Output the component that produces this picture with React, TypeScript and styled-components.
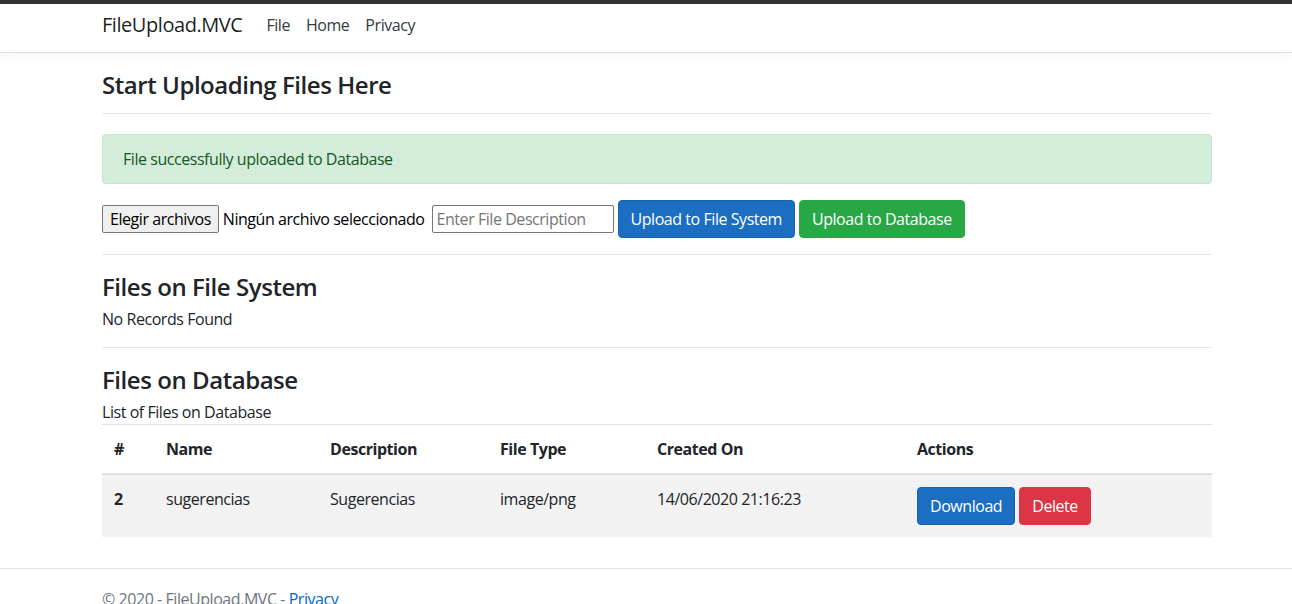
import React from "react";
import styled, { createGlobalStyle } from "styled-components";

const FONT = `"Open Sans", "Noto Sans", Arial, sans-serif`;

const Global = createGlobalStyle`
  html, body { margin: 0; padding: 0; background: #fff; }
  body {
    font-family: ${FONT};
    font-size: 16px;
    line-height: 1.5;
    color: #212529;
    letter-spacing: -0.028em;
  }
  * { box-sizing: border-box; }
  button, input { letter-spacing: inherit; }
`;

const TopStrip = styled.div`
  height: 4px;
  background: #333;
`;

const NavBar = styled.nav`
  height: 49px;
  padding-bottom: 6px;
  background: #fff;
  border-bottom: 1px solid #dee2e6;
  box-shadow: 0 0.25rem 0.75rem rgba(0, 0, 0, 0.05);
  display: flex;
  align-items: center;
`;

const Container = styled.div`
  width: 1110px;
  margin-left: 102px;
`;

const NavInner = styled(Container)`
  display: flex;
  align-items: center;
`;

const Brand = styled.a`
  font-size: 20px;
  color: rgba(0, 0, 0, 0.9);
  text-decoration: none;
  margin-right: 16px;
  line-height: 30px;
`;

const NavLink = styled.a`
  padding: 0 8px;
  font-size: 16px;
  color: #343a40;
  text-decoration: none;
  line-height: 24px;
`;

const Main = styled(Container)`
  padding-top: 16px;
`;

const Heading = styled.h3<{ $mb?: number }>`
  font-size: 24px;
  font-weight: 600;
  line-height: 32px;
  margin: 0 0 ${(p) => p.$mb ?? 4}px;
`;

const Rule = styled.hr<{ $mt?: number }>`
  border: 0;
  border-top: 1px solid rgba(0, 0, 0, 0.1);
  margin: ${(p) => p.$mt ?? 16}px 0 16px;
  height: 0;
`;

const Alert = styled.div`
  background: #d4edda;
  border: 1px solid #c3e6cb;
  color: #155724;
  border-radius: 4px;
  padding: 12px 20px;
  margin-top: 20px;
  margin-bottom: 16px;
`;

const UploadRow = styled.form`
  display: flex;
  align-items: center;
  gap: 4px;
  height: 38px;
`;

const FileButton = styled.button`
  font-family: ${FONT};
  font-size: 16px;
  height: 28px;
  padding: 0 7px;
  border: 1px solid #767676;
  border-radius: 2px;
  background: #efefef;
  color: #000;
  line-height: 26px;
`;

const FileLabel = styled.span`
  font-size: 16px;
  color: #000;
`;

const TextInput = styled.input`
  font-family: ${FONT};
  font-size: 16px;
  width: 182px;
  height: 28px;
  border: 1px solid #767676;
  border-radius: 2px;
  padding: 0 4px;
  margin-left: 3px;
  &::placeholder { color: #757575; }
`;

const Btn = styled.button<{ $variant: "primary" | "success" | "danger" }>`
  font-family: ${FONT};
  font-size: 16px;
  line-height: 24px;
  padding: 6px 12px;
  border-radius: 4px;
  color: #fff;
  cursor: pointer;
  border: 1px solid
    ${(p) =>
      p.$variant === "primary" ? "#1861ac" : p.$variant === "success" ? "#28a745" : "#dc3545"};
  background: ${(p) =>
    p.$variant === "primary" ? "#1b6ec2" : p.$variant === "success" ? "#28a745" : "#dc3545"};
`;

const Para = styled.div`
  line-height: 24px;
`;

const Table = styled.table`
  width: 100%;
  border-collapse: collapse;
  margin-bottom: 16px;
`;

const Th = styled.th<{ $w?: number }>`
  text-align: left;
  font-weight: 700;
  padding: 12px;
  vertical-align: bottom;
  border-top: 1px solid #dee2e6;
  border-bottom: 2px solid #dee2e6;
  width: ${(p) => (p.$w ? `${p.$w}px` : "auto")};
`;

const Tr = styled.tr<{ $striped?: boolean }>`
  background: ${(p) => (p.$striped ? "rgba(0,0,0,0.05)" : "transparent")};
`;

const Td = styled.td<{ $bold?: boolean }>`
  padding: 12px;
  vertical-align: top;
  font-weight: ${(p) => (p.$bold ? 700 : 400)};
`;

const Actions = styled.div`
  display: flex;
  gap: 4px;
`;

const Footer = styled.footer`
  border-top: 1px solid #dee2e6;
  margin-top: 31px;
  color: #6c757d;
  line-height: 60px;
  white-space: nowrap;
`;

const Link = styled.a`
  color: #0366d6;
  text-decoration: none;
`;

export default function App() {
  return (
    <>
      <Global />
      <TopStrip />
      <NavBar>
        <NavInner>
          <Brand href="#">FileUpload.MVC</Brand>
          <NavLink href="#">File</NavLink>
          <NavLink href="#">Home</NavLink>
          <NavLink href="#">Privacy</NavLink>
        </NavInner>
      </NavBar>
      <Main>
        <Heading $mb={0}>Start Uploading Files Here</Heading>
        <Rule $mt={12} />
        <Alert>File successfully uploaded to Database</Alert>
        <UploadRow>
          <FileButton type="button">Elegir archivos</FileButton>
          <FileLabel>Ningún archivo seleccionado</FileLabel>
          <TextInput placeholder="Enter File Description" />
          <Btn type="button" $variant="primary">Upload to File System</Btn>
          <Btn type="button" $variant="success">Upload to Database</Btn>
        </UploadRow>
        <Rule />
        <Heading>Files on File System</Heading>
        <Para>No Records Found</Para>
        <Rule />
        <Heading>Files on Database</Heading>
        <Para>List of Files on Database</Para>
        <Table>
          <thead>
            <tr>
              <Th $w={52}>#</Th>
              <Th $w={164}>Name</Th>
              <Th $w={170}>Description</Th>
              <Th $w={157}>File Type</Th>
              <Th $w={260}>Created On</Th>
              <Th>Actions</Th>
            </tr>
          </thead>
          <tbody>
            <Tr $striped>
              <Td $bold>2</Td>
              <Td>sugerencias</Td>
              <Td>Sugerencias</Td>
              <Td>image/png</Td>
              <Td>14/06/2020 21:16:23</Td>
              <Td>
                <Actions>
                  <Btn type="button" $variant="primary">Download</Btn>
                  <Btn type="button" $variant="danger">Delete</Btn>
                </Actions>
              </Td>
            </Tr>
          </tbody>
        </Table>
      </Main>
      <Footer>
        <Container>
          © 2020 - FileUpload.MVC - <Link href="#">Privacy</Link>
        </Container>
      </Footer>
    </>
  );
}
